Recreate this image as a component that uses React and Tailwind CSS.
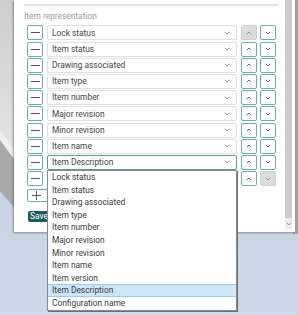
import React from 'react';

// last row's select sits under the open list, so its text is not shown
const ROWS = [
  'Lock status',
  'Item status',
  'Drawing associated',
  'Item type',
  'Item number',
  'Major revision',
  'Minor revision',
  'Item name',
  'Item Description',
  '',
];

const OPTIONS = [
  'Lock status',
  'Item status',
  'Drawing associated',
  'Item type',
  'Item number',
  'Major revision',
  'Minor revision',
  'Item name',
  'Item version',
  'Item Description',
  'Configuration name',
];

const FONT = { fontFamily: 'Roboto, "Liberation Sans", sans-serif' };

function Chevron({ up = false, className = '' }) {
  return (
    <svg width="6" height="4" viewBox="0 0 6 4" className={className}>
      <path
        d={up ? 'M0.8 3.2 L3 1 L5.2 3.2' : 'M0.8 0.8 L3 3 L5.2 0.8'}
        fill="none"
        stroke="currentColor"
        strokeWidth="0.9"
      />
    </svg>
  );
}

function IconButton({ children, disabled = false }) {
  return (
    <button
      type="button"
      className={`w-[16px] h-[15px] flex-shrink-0 flex items-center justify-center rounded-[2px] border ${
        disabled
          ? 'bg-[#dcdcdc] border-[#d0d0d0] text-[#8a8a8a]'
          : 'bg-white border-[#6aaea5] text-[#555]'
      }`}
    >
      {children}
    </button>
  );
}

function Row({ label, index, focused }) {
  return (
    <div className="flex items-center h-[15px]">
      <IconButton>
        <span className="block w-[9px] h-px bg-[#555]" />
      </IconButton>
      <div
        className={`ml-[4px] w-[190px] h-[15px] flex items-center justify-between pl-[4px] pr-[6px] rounded-[2px] border bg-white ${
          focused ? 'border-[#559c93]' : 'border-[#e0e0e0]'
        }`}
      >
        <span className="text-[8.4px] text-[#444] leading-none">{label}</span>
        <Chevron className="text-[#8a8a8a]" />
      </div>
      <div className="ml-[4px]">
        <IconButton disabled={index === 0}>
          <Chevron up />
        </IconButton>
      </div>
      <div className="ml-[3px]">
        <IconButton disabled={index === ROWS.length - 1}>
          <Chevron />
        </IconButton>
      </div>
    </div>
  );
}

function Backdrop() {
  return (
    <svg width="298" height="315" className="absolute inset-0">
      <defs>
        <linearGradient id="sky" x1="0" y1="0" x2="0" y2="1">
          <stop offset="0" stopColor="#c0cde0" />
          <stop offset="1" stopColor="#cdd8e8" />
        </linearGradient>
        <linearGradient id="part" x1="0" y1="0" x2="0" y2="1">
          <stop offset="0" stopColor="#cdcdcd" />
          <stop offset="1" stopColor="#e4e4e4" />
        </linearGradient>
      </defs>
      <rect width="298" height="315" fill="url(#sky)" />
      <polygon points="0,0 16,0 16,152 0,130" fill="url(#part)" />
      <polygon points="0,130 16,152 16,162 0,140" fill="#efefef" />
      <polygon points="0,140 16,162 16,210 0,191" fill="#a9a9a9" />
      <rect x="293" y="0" width="5" height="234" fill="#a2a2a2" />
    </svg>
  );
}

export default function App() {
  return (
    <div className="relative w-[298px] h-[315px] overflow-hidden" style={FONT}>
      <Backdrop />

      {/* dialog */}
      <div className="absolute left-[14px] top-0 w-[281px] h-[232px] bg-white flex shadow-[-1px_1px_2px_rgba(0,0,0,0.35)]">
        <div className="flex-1 pl-[10px] pr-[6px] pt-[4px]">
          <div className="h-[2px] bg-[#e4e4e4]" />
          <div className="mt-[6px] text-[8.4px] text-[#9c9c9c] leading-none">Item representation</div>
          <div className="mt-[5px] pl-[3px] flex flex-col gap-[1.2px]">
            {ROWS.map((r, i) => (
              <Row key={i} label={r} index={i} focused={i === 8} />
            ))}
          </div>
          <div className="mt-[3px] pl-[3px]">
            <button
              type="button"
              className="h-[13px] w-[30px] px-[4px] flex items-center rounded-[2px] border border-[#6aaea5] bg-white"
            >
              <svg width="9" height="9" viewBox="0 0 9 9">
                <path d="M4.5 0 V9 M0 4.5 H9" stroke="#555" strokeWidth="1" />
              </svg>
            </button>
          </div>
          <div className="mt-[9px] pl-[4px]">
            <button
              type="button"
              className="h-[11px] px-[2px] flex items-center rounded-[2px] bg-[#1c5d54] text-white text-[8.4px] leading-none"
            >
              Save
            </button>
          </div>
        </div>
        <div className="w-[7px] mr-[3px] flex flex-col pb-[3px]">
          <div className="flex-1 bg-[#cdcdcd]" />
          <div className="h-[11px] bg-[#ececec] flex items-center justify-center text-[#999]">
            <Chevron />
          </div>
        </div>
      </div>

      {/* open dropdown list */}
      <div className="absolute left-[47px] top-[170px] w-[190px] bg-white border border-[#8a8a8a] shadow-[1px_1px_0_#6f6f6f]">
        {OPTIONS.map((o) => (
          <div
            key={o}
            className={`h-[12.6px] flex items-center pl-[4px] text-[8.4px] text-[#3a3a3a] leading-none ${
              o === 'Item Description' ? 'bg-[#cfe5fa] border-y border-[#9dc8f0]' : ''
            }`}
          >
            {o}
          </div>
        ))}
      </div>
    </div>
  );
}
